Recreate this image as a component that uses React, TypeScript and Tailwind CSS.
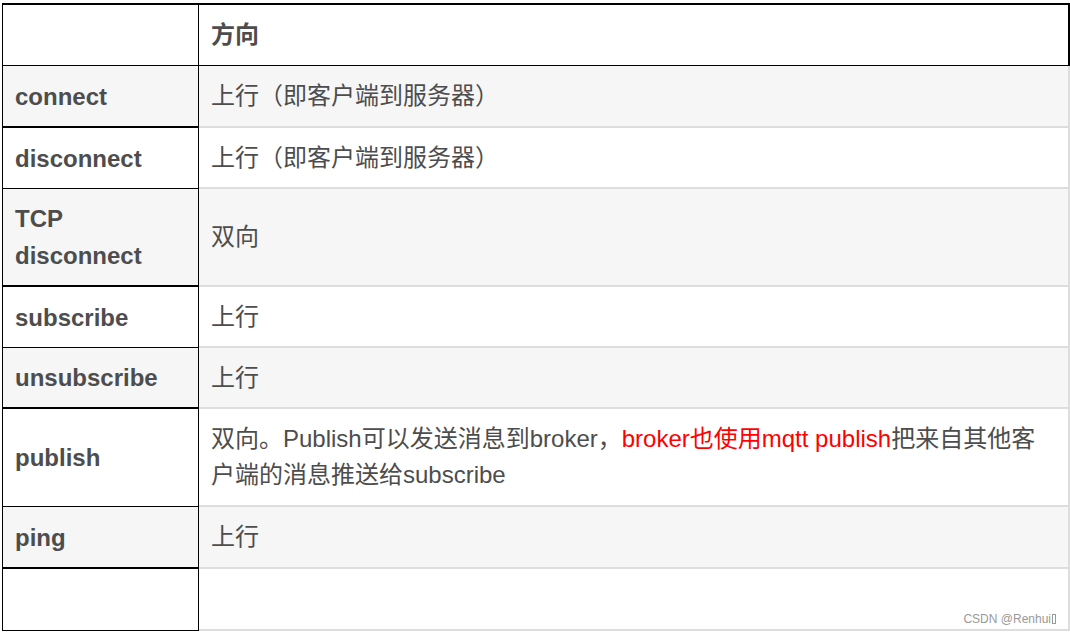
import React from "react";

const font = {
  fontFamily: '"Liberation Sans", Arial, "Noto Sans CJK SC", sans-serif',
};

type Row = {
  name: React.ReactNode;
  value: React.ReactNode;
  h: string;
  gray: boolean;
  thick: boolean;
};

export default function App() {
  const rows: Row[] = [
    { name: "connect", value: "上行（即客户端到服务器）", h: "h-[62px]", gray: true, thick: true },
    { name: "disconnect", value: "上行（即客户端到服务器）", h: "h-[61px]", gray: false, thick: false },
    { name: "TCP disconnect", value: "双向", h: "h-[98px]", gray: true, thick: true },
    { name: "subscribe", value: "上行", h: "h-[61px]", gray: false, thick: false },
    { name: "unsubscribe", value: "上行", h: "h-[61px]", gray: true, thick: true },
    {
      name: "publish",
      value: (
        <>
          双向。Publish可以发送消息到broker，
          <span className="text-[#ff0000]">broker也使用mqtt publish</span>
          把来自其他客
          <br />
          户端的消息推送给subscribe
        </>
      ),
      h: "h-[98px]",
      gray: false,
      thick: false,
    },
    { name: "ping", value: "上行", h: "h-[62px]", gray: true, thick: true },
    { name: "", value: "", h: "h-[62px]", gray: false, thick: false },
  ];

  return (
    <div className="relative w-[1070px] h-[632px] bg-white overflow-hidden" style={font}>
      <div className="ml-[2px] mt-[3px] w-[1068px] text-[#4d4d4d] text-[24px] leading-[36px]">
        {/* header */}
        <div className="flex h-[63px] border-t-2 border-l border-r-2 border-b border-black">
          <div className="w-[196px] border-r border-black" />
          <div className="flex-1 flex items-center pl-[12px] font-bold">方向</div>
        </div>
        {rows.map((r, i) => (
          <div key={i} className={`flex ${r.h} ${r.gray ? "bg-[#f6f6f6]" : "bg-white"}`}>
            <div
              className={`w-[197px] shrink-0 flex items-center pl-[12px] pr-3 font-bold border-l border-r border-black ${
                r.thick ? "border-b-2" : "border-b"
              }`}
            >
              <span className="leading-[37px]">{r.name}</span>
            </div>
            <div className="flex-1 flex items-center pl-[12px] pr-2 border-b-2 border-r-2 border-[#dddddd]">
              <span className="whitespace-nowrap">{r.value}</span>
            </div>
          </div>
        ))}
      </div>
      <div className="absolute right-[14px] bottom-[6px] text-[12px] leading-[14px] text-[#999999] flex items-center gap-[1px]">
        <span>CSDN @Renhui</span>
        <span className="inline-block w-[4px] h-[10px] border border-[#999999]" />
      </div>
    </div>
  );
}
